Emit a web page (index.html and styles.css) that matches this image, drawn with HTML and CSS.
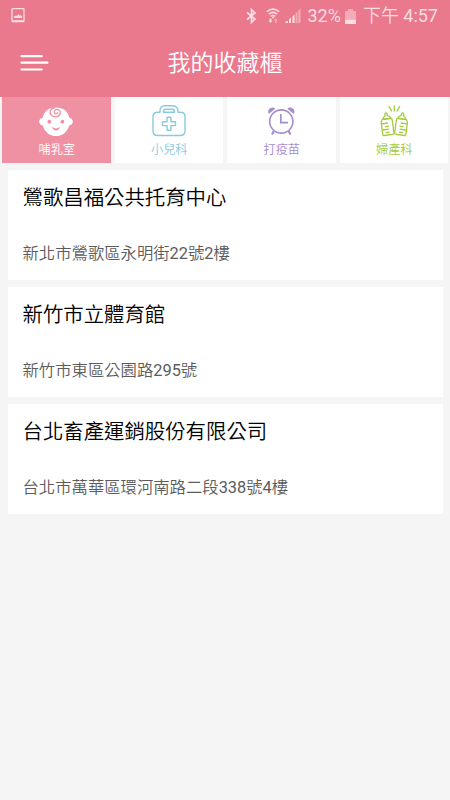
FILE: index.html
```html
<!DOCTYPE html>
<html lang="zh-Hant">
<head>
    <meta charset="UTF-8">
    <meta name="viewport" content="width=device-width, initial-scale=1.0">
    <title>我的收藏櫃</title>
    <link rel="stylesheet" href="styles.css">
</head>
<body>
<header>
    <div class="status-bar">
        <svg class="picture" width="14" height="15" viewBox="0 0 14 15">
            <rect x="1" y="0.700" width="12" height="12.800" rx="0.5" fill="none" stroke="currentColor" stroke-width="1.300"/>
            <path d="M1 12.300h12v1.800H1zM3 10V8.500l2-1 1 .5 1.500-2 1 1.500 1-.5 1.500 1.500V10z" fill="currentColor"/>
        </svg>
        <div class="status-right">
            <svg width="12" height="16" viewBox="0 0 12 16" fill="none" stroke="currentColor" stroke-width="1.700">
                <path d="M2 4.500l8 6.500-3.500 3.300V1.700L10 5l-8 6.500"/>
            </svg>
            <svg class="wifi" width="14" height="16" viewBox="0 0 14 16" fill="none" stroke="currentColor" stroke-width="1.500">
                <path d="M.8 3.800Q7-1.500 13.200 3.800M2.800 6.200q4.200-3.600 8.400 0M4.800 8.300q2.200-1.800 4.400 0"/>
                <circle cx="7" cy="9.500" r="1" fill="currentColor" stroke="none"/>
                <path d="M2.600 12.500h1V10.500h1.800v2h1L4.500 15z" fill="currentColor" stroke="none"/>
                <path d="M8 12.500h1V15h1.600v-2.500h1L9.800 10z" fill="currentColor" stroke="none" opacity=".5"/>
            </svg>
            <svg class="signal" width="16" height="16" viewBox="0 0 16 16" fill="currentColor">
                <path d="M1.500 13h1.500v2H0zM4 11.500l2-2V15H4zM7.500 8.500l2-2V15h-2z"/>
                <path d="M10.500 5.500l2-2V15h-2zM13.300 2.500L15.500.5V15h-2.200z" opacity=".5"/>
            </svg>
            <span class="percent num">32%</span>
            <svg class="battery" width="11" height="15" viewBox="0 0 11 15" fill="currentColor">
                <path d="M3 0h5v2h3v8.500H0V2h3z" opacity=".5"/>
                <path d="M0 10.500h11V15H0z"/>
            </svg>
            <span class="clock">下午 <span class="num">4:57</span></span>
        </div>
    </div>
    <div class="title-bar">
        <svg class="menu" width="29" height="18" viewBox="0 0 29 18" stroke="#fff" stroke-width="2.200" stroke-linecap="round">
            <path d="M1.500 2.200h20.200M1.500 8.700h26M1.500 15.500h20.200"/>
        </svg>
        <h1>我的收藏櫃</h1>
    </div>
</header>

<nav class="tabs">
    <a class="tab nursing active">
        <svg width="36" height="32" viewBox="0 0 36 32">
            <path d="M18 1.500c7.300 0 12.200 4 13.300 10.200 2.200.2 3.500 1.900 3.500 3.700 0 2-1.400 3.700-3.600 4C29.500 25.700 24.500 30 18 30S6.500 25.700 4.800 19.400c-2.200-.3-3.600-2-3.600-4 0-1.800 1.300-3.500 3.500-3.700C5.800 5.500 10.700 1.500 18 1.500z" fill="#fff"/>
            <path d="M17.300 1.500c-5 .6-6.300 4.500-4.400 7.200 2.300 3.300 8.400 2.700 9.300-1.300.7-3.100-2.700-5-4.900-3.400-2 1.500-1 3.900.9 3.900 1 0 1.700-.7 1.600-1.700" fill="none" stroke="#ef91a3" stroke-width="1.300"/>
            <circle cx="11.300" cy="15.700" r="1.900" fill="#ef91a3"/>
            <circle cx="24.400" cy="15.700" r="1.900" fill="#ef91a3"/>
            <path d="M14 20.800q4 3.200 8 0-.8 3.700-4 3.700t-4-3.700z" fill="#ef91a3"/>
        </svg>
        <span>哺乳室</span>
    </a>
    <a class="tab pediatrics">
        <svg width="36" height="32" viewBox="0 0 36 32" fill="none" stroke="currentColor" stroke-width="1.400" stroke-linejoin="round">
            <path d="M9 6.200V5q0-5.300 5.200-5.300h7.600Q27 0 27 5v1.200h2.300q4.700 0 4.700 4.300v14.200q0 4.800-4.700 4.800H6.700Q2 29.500 2 24.700V10.500q0-4.300 4.700-4.300z"/>
            <path d="M12.500 6.200V5.500q0-2.300 2.300-2.300h6.400q2.300 0 2.300 2.300v.7z"/>
            <path d="M16.100 11.300h3.800v4.500h4.600v3.800h-4.600v4.600h-3.800v-4.600h-4.600v-3.800h4.600z"/>
        </svg>
        <span>小兒科</span>
    </a>
    <a class="tab vaccine">
        <svg width="36" height="32" viewBox="0 0 36 32" fill="none" stroke="currentColor" stroke-width="1.600">
            <circle cx="18.300" cy="15.500" r="11.600"/>
            <path d="M17.800 8v8.600h7.200" stroke-width="1.700"/>
            <path d="M11 24.800l-2 3.700M25.500 24.800l2 3.700" stroke-width="2.200"/>
            <path d="M5.700 8q-1.800-5 2.500-6.300 2.700-.6 4 1zM30.900 8q1.800-5-2.500-6.300-2.700-.6-4 1z" fill="currentColor" stroke="none"/>
        </svg>
        <span>打疫苗</span>
    </a>
    <a class="tab obgyn">
        <svg width="36" height="32" viewBox="0 0 36 32" fill="none" stroke="currentColor" stroke-width="1.300" stroke-linejoin="round">
            <path d="M12.700.2l3.200 5.300M18.300-.5v6M23.900.2l-3.200 5.300"/>
            <g id="bottle">
                <path d="M7 13.300q0-2.500 2.200-3.300l-.4-2q.9-2 2.200-.3l.4 2q2.500.2 3.300 2.500z"/>
                <path d="M6 13.700l9.700-1.400.7 2.700 1.500 11.600q.2 1.600-1.300 1.800l-8.200 1.100q-1.500.2-1.700-1.400L5.200 16.700zM6 17.800l6-.8M9 20.800l4-.6M6.900 24l6-.8M9.500 26.700l4-.6"/>
            </g>
            <use href="#bottle" transform="matrix(-1 0 0 1 36.600 0)"/>
        </svg>
        <span>婦產科</span>
    </a>
</nav>

<main>
    <section class="card">
        <h2>鶯歌昌福公共托育中心</h2>
        <p>新北市鶯歌區永明街<span class="num">22</span>號<span class="num">2</span>樓</p>
    </section>
    <section class="card">
        <h2>新竹市立體育館</h2>
        <p>新竹市東區公園路<span class="num">295</span>號</p>
    </section>
    <section class="card">
        <h2>台北畜產運銷股份有限公司</h2>
        <p>台北市萬華區環河南路二段<span class="num">338</span>號<span class="num">4</span>樓</p>
    </section>
</main>
</body>
</html>
```

FILE: styles.css
```css
* {
    box-sizing: border-box;
}
body {
    margin: 0;
    min-height: 800px;
    background: #f5f5f5;
    font-family: Roboto, "Noto Sans CJK TC", sans-serif;
    font-weight: 350;
}
h1, h2, p {
    margin: 0;
    font-weight: 350;
}
.num {
    font-weight: 400;
}
svg {
    display: block;
    flex: none;
    overflow: visible;
}
header {
    height: 97px;
    background: #ea798d;
    color: #fff;
}
.status-bar {
    display: flex;
    justify-content: space-between;
    height: 32px;
    padding: 0 12px 0 11px;
    color: #fbdde2;
}
.picture {
    margin-top: 8px;
}
.status-right {
    display: flex;
    align-items: center;
    font-size: 18px;
    line-height: 32px;
    white-space: nowrap;
}
.wifi {
    margin-left: 9px;
}
.signal {
    margin-left: 5px;
}
.percent {
    margin-left: 6px;
}
.battery {
    margin-left: 4px;
}
.clock {
    margin-left: 7px;
}
.title-bar {
    display: grid;
    grid-template-columns: 60px 1fr 60px;
    align-items: center;
    height: 61px;
}
.menu {
    margin-left: 20px;
}
h1 {
    padding-top: 2px;
    font-size: 23px;
    line-height: 34px;
    text-align: center;
}
.tabs {
    display: grid;
    grid-template-columns: repeat(4, 1fr);
    gap: 4px;
    padding: 0 2px;
}
.tab {
    display: flex;
    flex-direction: column;
    align-items: center;
    height: 66px;
    padding-top: 9px;
    background: #fff;
    font-size: 12.2px;
    line-height: 18px;
}
.tab span {
    margin-top: 3px;
    padding-left: 1px;
}
.nursing {
    color: #ef91a3;
}
.pediatrics {
    color: #8bc9df;
}
.vaccine {
    color: #a58dce;
}
.obgyn {
    color: #a3cb3c;
}
.active {
    background: #ef91a3;
    color: #fff;
}
main {
    display: flex;
    flex-direction: column;
    gap: 7.5px;
    padding: 7px 7.5px 0;
}
.card {
    height: 109.5px;
    padding: 13px 15px 0;
    background: #fff;
}
.card h2 {
    color: #000;
    font-size: 20.4px;
    line-height: 30px;
}
.card p {
    margin-top: 29px;
    color: #5c5c5c;
    font-size: 16.35px;
    line-height: 24px;
}
```
